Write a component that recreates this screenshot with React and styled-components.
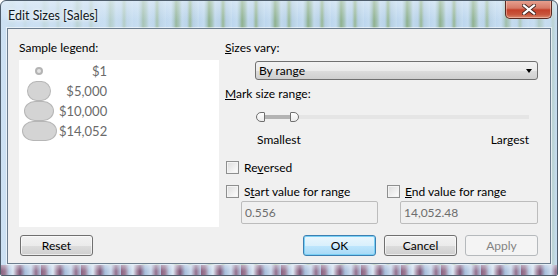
import React from 'react';
import styled, { createGlobalStyle } from 'styled-components';

const Global = createGlobalStyle`
  html, body { margin: 0; padding: 0; background: #ffffff; }
  body { font-family: Lato, "Liberation Sans", sans-serif; font-size: 12px; color: #000; }
  #root { width: 558px; height: 276px; }
`;

const Window = styled.div`
  box-sizing: border-box;
  width: 558px;
  height: 276px;
  border: 1px solid #4e5d6c;
  border-radius: 6px 6px 2px 2px;
  display: flex;
  flex-direction: column;
  overflow: hidden;
  background:
    linear-gradient(180deg, rgba(255,255,255,0.35) 0px, rgba(255,255,255,0) 20px),
    linear-gradient(90deg, rgba(205,225,243,0.95) 0px, rgba(205,225,243,0.6) 110px, rgba(205,225,243,0) 200px, rgba(205,225,243,0) 470px, rgba(205,225,243,0.7) 558px),
    repeating-linear-gradient(90deg, #bcd6ee 0px, #c3dbef 5px, #a8c6c6 8px, #8fb18e 10px, #a2c1b4 13px, #c0d8ec 16px, #b9d3e9 21px, #98b897 24px, #b5cfe2 27px, #c4dcf0 33px);
`;

const TitleBar = styled.div`
  height: 27px;
  display: flex;
  align-items: flex-start;
  flex-shrink: 0;
`;

const Title = styled.div`
  margin: 7px 0 0 7px;
  font-size: 12.5px;
  line-height: 15px;
  color: #101820;
  text-shadow: 0 0 6px rgba(255,255,255,0.9), 0 0 3px rgba(255,255,255,0.9);
`;

const CloseButton = styled.div`
  margin: -1px 5px 0 auto;
  width: 47px;
  height: 19px;
  box-sizing: border-box;
  border: 1px solid #5a2a22;
  border-top: none;
  border-radius: 0 0 5px 5px;
  background: linear-gradient(180deg, #e8a493 0%, #d67a67 45%, #c4412a 55%, #c8553c 80%, #d98a6e 100%);
  box-shadow: inset 0 0 0 1px rgba(255,220,210,0.45);
  display: flex;
  align-items: center;
  justify-content: center;
`;

const Client = styled.div`
  margin: 0 6px 0 6px;
  height: 236px;
  box-sizing: border-box;
  border: 1px solid #6c7d8e;
  box-shadow: 0 0 0 1px rgba(255,255,255,0.55);
  background: #f0f0f0;
  display: flex;
  flex-direction: column;
  padding: 11px 12px 7px 11px;
`;

const BottomGlass = styled.div`
  flex: 1;
  margin-top: 1px;
  background:
    linear-gradient(180deg, rgba(235,240,248,0.5) 0px, rgba(235,240,248,0) 6px),
    repeating-linear-gradient(90deg, #8a6080 0px, #9c7a94 4px, #b9cde5 8px, #dbe7f3 12px, #a68aa2 16px, #7e5576 19px, #a8bfdc 24px, #c9d9ec 30px, #93708d 35px, #b0c6e2 40px);
`;

const Body = styled.div`
  display: flex;
  gap: 6px;
  height: 187px;
`;

const LeftCol = styled.div`
  width: 200px;
  display: flex;
  flex-direction: column;
`;

const RightCol = styled.div`
  flex: 1;
  display: flex;
  flex-direction: column;
`;

const Label = styled.div`
  line-height: 15px;
  height: 15px;
  margin-top: ${p => p.$mt || 0}px;
  color: #000;
  white-space: nowrap;
  u { text-decoration: underline; text-underline-offset: 1px; }
`;

const LegendBox = styled.div`
  margin-top: 5px;
  height: 167px;
  background: #ffffff;
  padding-top: 1px;
  box-sizing: border-box;
`;

const LegendRow = styled.div`
  display: grid;
  grid-template-columns: 40px 48px;
  height: 20px;
  align-items: center;
`;

const ShapeCell = styled.div`
  height: 20px;
  display: flex;
  align-items: center;
  justify-content: center;
`;

const Mark = styled.div`
  width: ${p => p.$w}px;
  height: ${p => p.$h}px;
  box-sizing: border-box;
  border: ${p => (p.$ring ? '2px solid #b4b4b4' : '1px solid #b6b6b6')};
  background: ${p => (p.$ring ? '#e4e4e4' : '#d4d4d4')};
  border-radius: ${p => p.$r};
`;

const LegendText = styled.div`
  text-align: right;
  font-size: 13px;
  color: #6a6a6a;
  line-height: 20px;
`;

const Combo = styled.div`
  margin: 6px 0 0 30px;
  width: 283px;
  height: 19px;
  box-sizing: border-box;
  border: 1px solid #707070;
  border-radius: 3px;
  background: linear-gradient(180deg, #f2f2f2 0%, #ebebeb 50%, #dddddd 51%, #cfcfcf 100%);
  display: flex;
  align-items: center;
  justify-content: space-between;
  padding: 0 5px 0 3px;
`;

const ComboText = styled.span`
  line-height: 15px;
`;

const Arrow = styled.span`
  width: 0;
  height: 0;
  border-left: 3.5px solid transparent;
  border-right: 3.5px solid transparent;
  border-top: 4px solid #000;
`;

const Slider = styled.div`
  position: relative;
  margin: 11px 0 0 31px;
  width: 273px;
  height: 10px;
`;

const Track = styled.div`
  position: absolute;
  left: 2px;
  right: 0;
  top: 3px;
  height: 4px;
  background: #e5e5e5;
`;

const TrackFill = styled.div`
  position: absolute;
  left: 8px;
  width: 27px;
  top: 3px;
  height: 4px;
  background: #b3b3b3;
`;

const Thumb = styled.div`
  position: absolute;
  top: 0;
  left: ${p => p.$left}px;
  width: 9px;
  height: 10px;
  box-sizing: border-box;
  border: 1px solid #6f6f6f;
  background: linear-gradient(180deg, #ffffff, #ececec);
  border-radius: ${p => (p.$side === 'left' ? '5px 1px 1px 5px' : '1px 5px 5px 1px')};
`;

const Ends = styled.div`
  margin: 10px 0 0 32px;
  width: 272px;
  display: flex;
  justify-content: space-between;
  line-height: 15px;
`;

const CheckRow = styled.div`
  margin-top: ${p => p.$mt}px;
  display: grid;
  grid-template-columns: 161px 1fr;
`;

const CheckItem = styled.label`
  display: flex;
  align-items: center;
  gap: 5px;
  line-height: 15px;
  padding-left: 1px;
  white-space: nowrap;
`;

const CheckText = styled.span`
  u { text-decoration: underline; text-underline-offset: 1px; }
`;

const Box = styled.span`
  width: 13px;
  height: 13px;
  box-sizing: border-box;
  border: 1px solid #8e8f8f;
  background: linear-gradient(135deg, #dcdcdc 0%, #f4f4f4 70%, #ffffff 100%);
  box-shadow: inset 0 0 0 1px #f4f4f4;
  flex-shrink: 0;
`;

const InputRow = styled.div`
  margin-top: 2px;
  display: grid;
  grid-template-columns: 161px 1fr;
`;

const Input = styled.div`
  margin-left: ${p => p.$ml}px;
  width: ${p => p.$w}px;
  height: 23px;
  box-sizing: border-box;
  border: 1px solid #bcbcbc;
  border-radius: 2px;
  background: #f0f0f0;
  color: #6d6d6d;
  padding-left: 3px;
  line-height: 21px;
`;

const ButtonRow = styled.div`
  margin-top: 8px;
  display: flex;
  gap: 8px;
  padding-left: 1px;
`;

const Spacer = styled.div`
  flex: 1;
`;

const Button = styled.div`
  width: 73px;
  height: 21px;
  box-sizing: border-box;
  border: 1px solid ${p => (p.$disabled ? '#b5b9bc' : p.$default ? '#3c7fb1' : '#707070')};
  border-radius: 3px;
  background: ${p => (p.$disabled
    ? '#f4f4f4'
    : p.$default
      ? 'linear-gradient(180deg, #eaf6fd 0%, #d9f0fc 50%, #bee6fd 51%, #a7d9f5 100%)'
      : 'linear-gradient(180deg, #f2f2f2 0%, #ebebeb 50%, #dddddd 51%, #cfcfcf 100%)')};
  box-shadow: ${p => (p.$default ? 'inset 0 0 0 1px #7ad0f5' : p.$disabled ? 'none' : 'inset 0 0 0 1px rgba(255,255,255,0.6)')};
  color: ${p => (p.$disabled ? '#838383' : '#000')};
  display: flex;
  align-items: center;
  justify-content: center;
  line-height: 15px;
`;

const legend = [
  { v: '$1', w: 8, h: 8, r: '50%', ring: true },
  { v: '$5,000', w: 24, h: 20, r: '40% / 50%' },
  { v: '$10,000', w: 30, h: 20, r: '36% / 50%' },
  { v: '$14,052', w: 35, h: 20, r: '32% / 50%' },
];

export default function App() {
  return (
    <>
      <Global />
      <Window>
        <TitleBar>
          <Title>Edit Sizes [Sales]</Title>
          <CloseButton>
            <svg width="14" height="11" viewBox="0 0 14 11">
              <path d="M2 1.5 L12 9.5 M12 1.5 L2 9.5" stroke="#4a2a24" strokeWidth="4" strokeLinecap="square" />
              <path d="M2 1.5 L12 9.5 M12 1.5 L2 9.5" stroke="#ffffff" strokeWidth="2.2" strokeLinecap="square" />
            </svg>
          </CloseButton>
        </TitleBar>
        <Client>
          <Body>
            <LeftCol>
              <Label>Sample legend:</Label>
              <LegendBox>
                {legend.map(l => (
                  <LegendRow key={l.v}>
                    <ShapeCell>
                      <Mark $w={l.w} $h={l.h} $r={l.r} $ring={l.ring} />
                    </ShapeCell>
                    <LegendText>{l.v}</LegendText>
                  </LegendRow>
                ))}
              </LegendBox>
            </LeftCol>
            <RightCol>
              <Label><u>S</u>izes vary:</Label>
              <Combo>
                <ComboText>By range</ComboText>
                <Arrow />
              </Combo>
              <Label $mt={6}><u>M</u>ark size range:</Label>
              <Slider>
                <Track />
                <TrackFill />
                <Thumb $left={0} $side="left" />
                <Thumb $left={34} $side="right" />
              </Slider>
              <Ends>
                <span>Smallest</span>
                <span>Largest</span>
              </Ends>
              <CheckRow $mt={13}>
                <CheckItem><Box /><CheckText>Re<u>v</u>ersed</CheckText></CheckItem>
              </CheckRow>
              <CheckRow $mt={9}>
                <CheckItem><Box /><CheckText>S<u>t</u>art value for range</CheckText></CheckItem>
                <CheckItem><Box /><CheckText><u>E</u>nd value for range</CheckText></CheckItem>
              </CheckRow>
              <InputRow>
                <Input $ml={16} $w={137}>0.556</Input>
                <Input $ml={14} $w={138}>14,052.48</Input>
              </InputRow>
            </RightCol>
          </Body>
          <ButtonRow>
            <Button>Reset</Button>
            <Spacer />
            <Button $default>OK</Button>
            <Button>Cancel</Button>
            <Button $disabled>Apply</Button>
          </ButtonRow>
        </Client>
        <BottomGlass />
      </Window>
    </>
  );
}
